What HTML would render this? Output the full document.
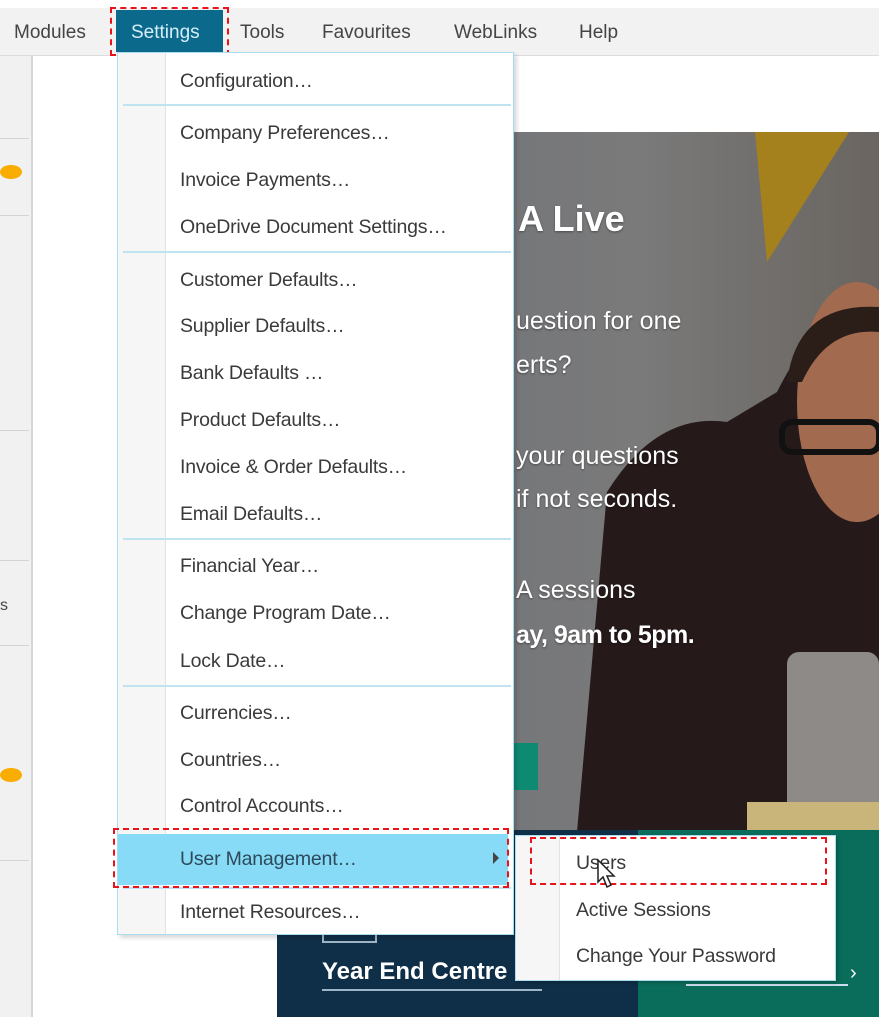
<!DOCTYPE html>
<html><head><meta charset="utf-8"><style>
*{margin:0;padding:0;box-sizing:border-box}
body{width:879px;height:1017px;overflow:hidden;background:#fff;font-family:"Liberation Sans",sans-serif;position:relative}
.a{position:absolute}
.mb{left:0;top:8px;width:879px;height:48px;background:#f2f2f2;border-bottom:1px solid #ddd}
.mi{top:22px;font-size:19px;color:#444}
.dash{border:2px dashed #e8141b}
.left{left:0;top:56px;width:33px;height:961px;background:#f1f1f1;border-right:2px solid #d6d6d6}
.hl{left:0;width:29px;height:1px;background:#d4d4d4}
.dot{width:22px;height:14px;border-radius:50%;background:#f9ad00;left:0}
.menu{left:117px;top:52px;width:397px;height:883px;background:#fff;border:1px solid #a9dcef;box-shadow:3px 3px 4px rgba(0,0,0,.15)}
.gut{left:0;top:0;width:48px;height:100%;background:#f6f6f6;border-right:1px solid #e2e2e2}
.it{left:62px;font-size:19.5px;color:#3a3a3a;white-space:nowrap;letter-spacing:-0.2px}
.sep{left:5px;width:388px;height:2px;background:#bfe3f1}
.bt{color:#fff;font-size:25px;white-space:nowrap;text-shadow:0 1px 2px rgba(0,0,0,.4)}
</style></head><body>
<div class="a mb"></div>
<div class="a mi" style="left:14px">Modules</div>
<div class="a" style="left:116px;top:10px;width:107px;height:42px;background:#0b6a8c"></div>
<div class="a mi" style="left:131px;color:#d6eef8">Settings</div>
<div class="a dash" style="left:110px;top:7px;width:119px;height:49px"></div>
<div class="a mi" style="left:240px">Tools</div>
<div class="a mi" style="left:322px">Favourites</div>
<div class="a mi" style="left:454px">WebLinks</div>
<div class="a mi" style="left:579px">Help</div>

<div class="a left"></div>
<div class="a hl" style="top:138px"></div><div class="a hl" style="top:215px"></div><div class="a hl" style="top:430px"></div><div class="a hl" style="top:560px"></div><div class="a hl" style="top:645px"></div><div class="a hl" style="top:860px"></div>
<div class="a dot" style="top:165px"></div><div class="a dot" style="top:768px"></div>
<div class="a" style="left:0;top:597px;font-size:16px;color:#444">s</div>

<!-- banner -->
<div class="a" style="left:277px;top:132px;width:602px;height:700px;background:linear-gradient(90deg,#6f6f72 0%,#76777a 40%,#7a7a7a 60%,#6a6560 100%)"></div>
<svg class="a" style="left:277px;top:132px" width="602" height="700">
<polygon points="478,0 572,0 490,130" fill="#a5811e"/>
<path d="M300,700 L330,360 Q380,280 450,290 L500,260 Q520,220 540,200 L602,190 L602,700 Z" fill="#26191a"/>
<ellipse cx="580" cy="270" rx="60" ry="120" fill="#a26a4f"/>
<path d="M510,250 Q520,170 602,175 L602,200 Q550,195 525,250Z" fill="#2b1d18"/>
<rect x="505" y="290" width="97" height="30" rx="10" fill="none" stroke="#111" stroke-width="6"/>
<rect x="510" y="520" width="92" height="180" rx="12" fill="#8d8a87"/>
<rect x="470" y="670" width="140" height="30" fill="#c9b57a"/>
<rect x="237" y="611" width="24" height="47" fill="#0e8a72"/>
</svg>
<div class="a bt" style="left:518px;top:198px;font-size:36px;font-weight:bold">A Live</div>
<div class="a bt" style="left:516px;top:307px">uestion for one</div>
<div class="a bt" style="left:516px;top:351px">erts?</div>
<div class="a bt" style="left:516px;top:442px">your questions</div>
<div class="a bt" style="left:516px;top:485px">if not seconds.</div>
<div class="a bt" style="left:516px;top:576px">A sessions</div>
<div class="a bt" style="left:516px;top:621px;font-weight:bold;letter-spacing:-0.5px">ay, 9am to 5pm.</div>
<div class="a" style="left:277px;top:830px;width:361px;height:187px;background:#0f2f48"></div>
<div class="a" style="left:638px;top:830px;width:241px;height:187px;background:#0a6d5b"></div>
<div class="a" style="left:322px;top:928px;width:55px;height:15px;border:2px solid #9fb4c4;border-top:none"></div>
<div class="a" style="left:322px;top:958px;font-size:24px;font-weight:bold;color:#fff;border-bottom:2px solid #9fb4c4;padding-bottom:3px;width:220px">Year End Centre</div>
<div class="a" style="left:686px;top:984px;width:162px;height:2px;background:#cde"></div>
<div class="a" style="left:850px;top:962px;color:#fff;font-size:20px">›</div>

<!-- menu -->
<div class="a menu">
<div class="a gut"></div>
<div class="a it" style="top:17px">Configuration…</div>
<div class="a sep" style="top:51px"></div>
<div class="a it" style="top:69px">Company Preferences…</div>
<div class="a it" style="top:116px">Invoice Payments…</div>
<div class="a it" style="top:163px">OneDrive Document Settings…</div>
<div class="a sep" style="top:198px"></div>
<div class="a it" style="top:216px">Customer Defaults…</div>
<div class="a it" style="top:262px">Supplier Defaults…</div>
<div class="a it" style="top:309px">Bank Defaults …</div>
<div class="a it" style="top:356px">Product Defaults…</div>
<div class="a it" style="top:403px">Invoice &amp; Order Defaults…</div>
<div class="a it" style="top:450px">Email Defaults…</div>
<div class="a sep" style="top:485px"></div>
<div class="a it" style="top:502px">Financial Year…</div>
<div class="a it" style="top:549px">Change Program Date…</div>
<div class="a it" style="top:597px">Lock Date…</div>
<div class="a sep" style="top:632px"></div>
<div class="a it" style="top:649px">Currencies…</div>
<div class="a it" style="top:696px">Countries…</div>
<div class="a it" style="top:742px">Control Accounts…</div>
<div class="a" style="left:0;top:781px;width:390px;height:51px;background:#87dbf7"></div>
<div class="a it" style="top:795px;color:#2d4a5a">User Management…</div>
<div class="a" style="left:375px;top:799px;width:0;height:0;border-left:6px solid #444;border-top:6px solid transparent;border-bottom:6px solid transparent"></div>
<div class="a sep" style="top:834px"></div>
<div class="a it" style="top:848px">Internet Resources…</div>
</div>
<div class="a dash" style="left:113px;top:828px;width:396px;height:60px"></div>

<!-- submenu -->
<div class="a" style="left:515px;top:835px;width:321px;height:146px;background:#fff;border:1px solid #a9dcef;box-shadow:2px 2px 4px rgba(0,0,0,.2)">
<div class="a" style="left:0;top:0;width:44px;height:100%;background:#f6f6f6;border-right:1px solid #e2e2e2"></div>
<div class="a it" style="left:60px;top:16px">Users</div>
<div class="a it" style="left:60px;top:63px">Active Sessions</div>
<div class="a it" style="left:60px;top:109px">Change Your Password</div>
</div>
<div class="a dash" style="left:530px;top:837px;width:297px;height:48px"></div>
<svg class="a" style="left:596px;top:858px" width="22" height="34"><path d="M2,2 L2,24 L7,19 L11,29 L15,27 L11,18 L18,18 Z" fill="#fff" stroke="#222" stroke-width="1.5"/></svg>
</body></html>
